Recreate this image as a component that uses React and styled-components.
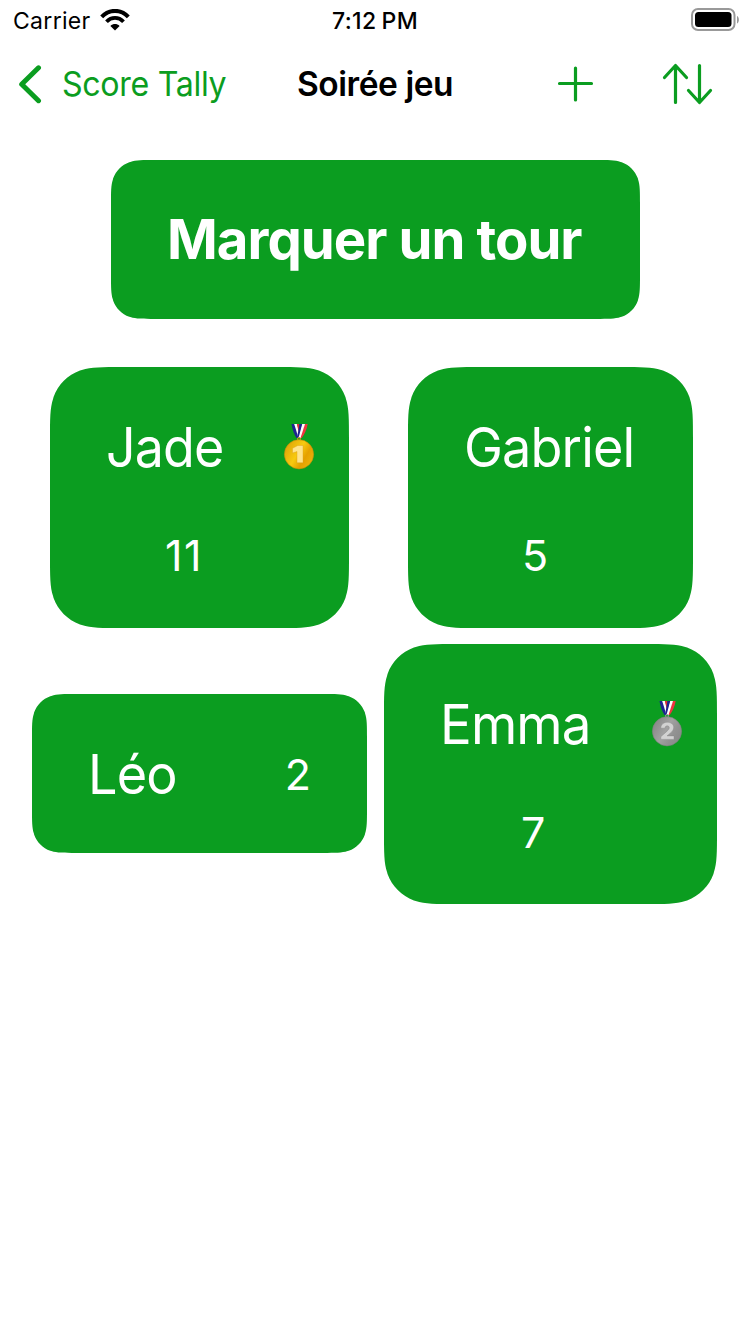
import React from 'react';
import styled, { createGlobalStyle } from 'styled-components';

const GREEN = '#0b9d20';

const Global = createGlobalStyle`
  body { margin: 0; background: #fff; font-family: Inter, "Liberation Sans", sans-serif; }
  svg { display: block; flex: none; }
`;

// Rounded rectangle with continuous-curvature corners.
const squircle = (w, h, r) => {
  const a = 1.52866 * r, b = 1.08849 * r, c = 0.8684 * r, d = 0.66993 * r;
  const e = 0.0655 * r, f = 0.63149 * r, g = 0.07491 * r, i = 0.37282 * r, j = 0.16906 * r;
  return `M${a} 0 L${w - a} 0 C${w - b} 0 ${w - c} 0 ${w - d} ${e} L${w - f} ${g}
    C${w - i} ${j} ${w - j} ${i} ${w - g} ${f} L${w - e} ${d} C${w} ${c} ${w} ${b} ${w} ${a}
    L${w} ${h - a} C${w} ${h - b} ${w} ${h - c} ${w - e} ${h - d} L${w - g} ${h - f}
    C${w - j} ${h - i} ${w - i} ${h - j} ${w - f} ${h - g} L${w - d} ${h - e}
    C${w - c} ${h} ${w - b} ${h} ${w - a} ${h} L${a} ${h}
    C${b} ${h} ${c} ${h} ${d} ${h - e} L${f} ${h - g} C${i} ${h - j} ${j} ${h - i} ${g} ${h - f}
    L${e} ${h - d} C0 ${h - c} 0 ${h - b} 0 ${h - a} L0 ${a} C0 ${b} 0 ${c} ${e} ${d} L${g} ${f}
    C${j} ${i} ${i} ${j} ${f} ${g} L${d} ${e} C${c} 0 ${b} 0 ${a} 0 Z`.replace(/\s+/g, ' ');
};

const Screen = styled.main`
  width: 750px;
  height: 1334px;
  overflow: hidden;
  background: #fff;
`;
const StatusBar = styled.header`
  height: 40px;
  display: grid;
  grid-template-columns: 1fr auto 1fr;
  align-items: center;
  padding: 0 10px 0 13px;
  box-sizing: border-box;
  font-size: 23px;
`;
const Carrier = styled.div`
  display: flex;
  align-items: center;
  gap: 9px;
  letter-spacing: 0.3px;

  span { padding-top: 2px; }
`;
const Clock = styled.time`
  padding-top: 2px;
  margin-right: 3px;
  font-weight: 500;
  letter-spacing: 0.4px;
  word-spacing: -1.5px;
`;
const Battery = styled.div`
  justify-self: end;
`;
const NavBar = styled.nav`
  height: 88px;
  display: flex;
  align-items: center;
  padding-left: 18px;
  font-size: 33.5px;
  color: ${GREEN};
`;
const BackButton = styled.a`
  width: 279px;
  display: flex;
  align-items: center;
  gap: 18.5px;
  white-space: nowrap;
`;
const BackLabel = styled.span`
  letter-spacing: -0.35px;
  transform: scaleX(0.96);
  transform-origin: left;
`;
const Title = styled.h1`
  width: 259px;
  margin: 0;
  font-size: 33.5px;
  font-weight: 600;
  letter-spacing: -0.45px;
  color: #000;
`;
const Actions = styled.div`
  display: flex;
  align-items: center;
  gap: 68px;
`;
const Tile = styled.div`
  box-sizing: border-box;
  flex: none;
  width: ${(p) => p.$w}px;
  height: ${(p) => p.$h}px;
  background: ${GREEN};
  color: #fff;
  clip-path: path('${(p) => squircle(p.$w, p.$h, Math.min(p.$w, p.$h) * 0.182)}');
`;
const RoundButton = styled(Tile)`
  margin: 32px 0 48px 111px;
  padding: 0 0 2px 56px;
  border: 0;
  display: flex;
  align-items: center;
  font-family: inherit;
  font-size: 54.5px;
  font-weight: 700;
  letter-spacing: -0.95px;
  white-space: nowrap;
`;
const Row = styled.div`
  display: flex;
  align-items: center;
  gap: ${(p) => p.$gap}px;
  margin: 0 0 16px ${(p) => p.$left}px;
`;
const PlayerCard = styled(Tile)`
  display: flex;
  flex-direction: column;
  padding: 48px 34px 0 56px;
`;
const CompactCard = styled(Tile)`
  display: flex;
  align-items: center;
  justify-content: space-between;
  padding: 0 56px;
  margin-bottom: 1px;
`;
const NameLine = styled.div`
  display: flex;
  justify-content: space-between;
  align-items: center;
  height: 64px;
`;
const Name = styled.span`
  font-size: 54.5px;
  line-height: 64px;
  letter-spacing: -0.9px;
  transform: scaleX(${(p) => p.$stretch});
  transform-origin: left;
`;
const Score = styled.span`
  font-size: 43px;
  line-height: 52px;
`;
const ScoreLine = styled.div`
  margin-top: 50px;
  padding-left: ${(p) => p.$inset}px;
  letter-spacing: 1.500px;
`;

const Medal = ({ rank }) => {
  const gold = rank === 1;
  const id = gold ? 'gold' : 'silver';
  return (
    <svg width="32" height="48" viewBox="0 0 32 48">
      <defs>
        <linearGradient id={id} x1="0" y1="0.2" x2="1" y2="0.8">
          <stop offset="0" stopColor={gold ? '#dca207' : '#858585'} />
          <stop offset="0.45" stopColor={gold ? '#f8ca10' : '#a2a2a2'} />
          <stop offset="0.7" stopColor={gold ? '#e5a000' : '#929292'} />
          <stop offset="1" stopColor={gold ? '#edb60d' : '#898989'} />
        </linearGradient>
      </defs>
      <path d="M8.500 1h3l4.500 14h-2.500q-3.500-5-5-14z" fill="#1c2390" />
      <path d="M11.200 1h3l3 12-1.700 2z" fill="#fff" />
      <path d="M13.800 1h2.400l2 10-1.500 2z" fill="#e22b35" />
      <path d="M24.700 1h-3l-5 14h2q4.500-6 6-14z" fill="#f03440" />
      <path d="M22 1h-3.200l-4 14h2.700z" fill="#fff" />
      <path d="M19.200 1h-2.700l-2 11 1 3z" fill="#1c2390" />
      <circle cx="16" cy="16" r="1.500" fill="none" stroke={gold ? '#c99820' : '#999'} />
      <circle cx="16" cy="31.300" r="14.600" fill={`url(#${id})`} stroke={gold ? '#c88d08' : '#808080'} strokeWidth="0.600" />
      {gold ? (
        <path d="M14.800 22.500H20v17.300h-6V28.500L9.500 30v-4.700z" fill="#ffe48c" stroke="#d99d18" strokeWidth="0.400" />
      ) : (
        <path d="M9.800 28.200C9.800 24.500 12.500 22.300 16.300 22.300c3.800 0 6.400 2 6.400 5.100 0 2.300-1.300 3.900-3.500 5.800l-3.200 2.700h7v3.500H9.800v-2.700l6-5.300c1.700-1.500 2.500-2.400 2.500-3.600 0-1.200-.8-2-2.100-2s-2.200.9-2.200 2.400z" fill="#d2d2d2" stroke="#848484" strokeWidth="0.400" />
      )}
    </svg>
  );
};

const Player = ({ name, score, rank, w, h, inset, stretch }) => (
  <PlayerCard $w={w} $h={h}>
    <NameLine>
      <Name $stretch={stretch}>{name}</Name>
      {rank && <Medal rank={rank} />}
    </NameLine>
    <ScoreLine $inset={inset}><Score>{score}</Score></ScoreLine>
  </PlayerCard>
);

export default function App() {
  return (
    <Screen>
      <Global />
      <StatusBar>
        <Carrier>
          <span>Carrier</span>
          <svg width="30" height="22" viewBox="0 0 30 22">
            <path d="M1.700 7.800C9-.1 21-.1 28.300 7.800" fill="none" stroke="#000" strokeWidth="4" />
            <path d="M6.500 12.700c4.800-5 12.200-5 17 0" fill="none" stroke="#000" strokeWidth="3.800" />
            <path d="M10.400 17c2.700-2.600 6.500-2.600 9.200 0L15 21.600z" fill="#000" />
          </svg>
        </Carrier>
        <Clock>7:12 PM</Clock>
        <Battery>
          <svg width="49" height="24" viewBox="0 0 49 24">
            <rect x="1" y="1" width="42.500" height="21" rx="6" fill="none" stroke="#999" strokeWidth="2" />
            <rect x="4" y="4" width="36.500" height="15" rx="3.500" fill="#000" />
            <path d="M46 8c2.500 1 2.500 6.500 0 7.500z" fill="#999" />
          </svg>
        </Battery>
      </StatusBar>
      <NavBar>
        <BackButton>
          <svg width="25" height="40" viewBox="0 0 25 40" fill="none" stroke={GREEN} strokeWidth="5" strokeLinecap="round" strokeLinejoin="round">
            <path d="M20.500 3.800 3.700 20.300 20.500 36.700" />
          </svg>
          <BackLabel>Score Tally</BackLabel>
        </BackButton>
        <Title>Soirée jeu</Title>
        <Actions>
          <svg width="38" height="38" viewBox="0 0 38 38" fill="none" stroke={GREEN} strokeWidth="3.200" strokeLinecap="round">
            <path d="M19.500 3v32M3.500 18.500h32" />
          </svg>
          <svg width="52" height="42" viewBox="0 0 52 42" fill="none" stroke={GREEN} strokeWidth="3.200" strokeLinecap="round" strokeLinejoin="round">
            <path d="M13.500 39.500V2.500M2.500 14.500l11-12 11 12M37.500 2.500v37M26.500 27.500l11 12 11-12" />
          </svg>
        </Actions>
      </NavBar>
      <RoundButton as="button" $w={529} $h={159}>Marquer un tour</RoundButton>
      <Row $left={50} $gap={59}>
        <Player name="Jade" score={11} rank={1} w={299} h={261} inset={59} stretch={0.953} />
        <Player name="Gabriel" score={5} w={285} h={261} inset={58} stretch={0.957} />
      </Row>
      <Row $left={32} $gap={17}>
        <CompactCard $w={335} $h={159}>
          <Name $stretch={0.958}>Léo</Name>
          <Score>2</Score>
        </CompactCard>
        <Player name="Emma" score={7} rank={2} w={333} h={260} inset={81} stretch={0.97} />
      </Row>
    </Screen>
  );
}
